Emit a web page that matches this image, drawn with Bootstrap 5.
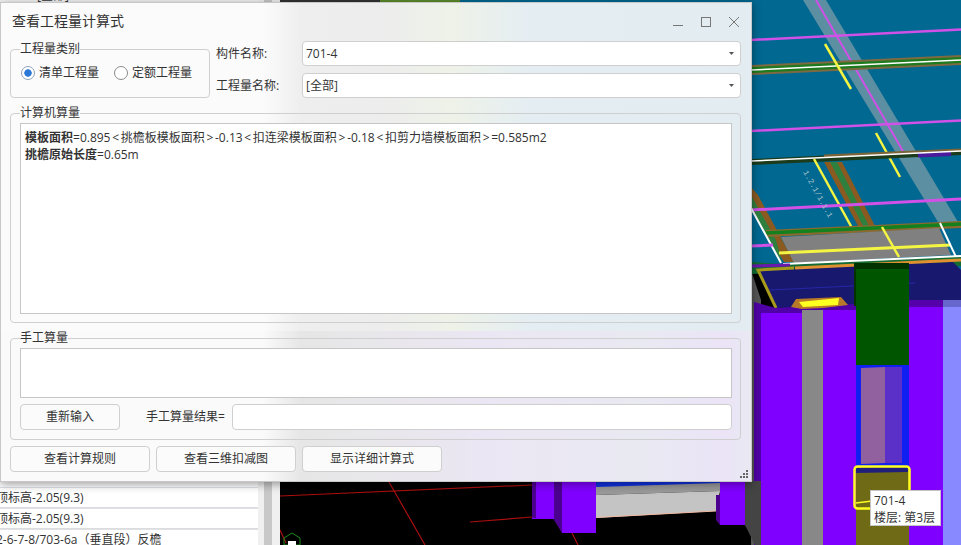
<!DOCTYPE html>
<html lang="zh-CN">
<head>
  <meta charset="UTF-8">
  <meta name="viewport" content="width=device-width, initial-scale=1.0">
  <title>查看工程量计算式</title>
  <link href="https://cdn.jsdelivr.net/npm/bootstrap@5.3.3/dist/css/bootstrap.min.css" rel="stylesheet">
  <style>
    html, body { height: 545px; overflow: hidden; }
    body {
      position: relative;
      font-family: "Open Sans", "Noto Sans CJK SC", sans-serif;
      font-size: 12px;
      color: #333;
      background: #f0f0f0;
    }

    /* app behind the dialog */
    .app-left { width: 280px; height: 545px; flex: none; }
    .tree-col { width: 258px; background: #fff; overflow: hidden; }
    .clip-top { margin-top: -12px; height: 15px; line-height: 15px; padding-left: 37px; background: #f4f4f4; }
    .tree-list { border-radius: 0; }
    .tree-row {
      height: 21px;
      line-height: 20px;
      padding: 0;
      margin: 0;
      font-size: 12px;
      color: #333;
      white-space: nowrap;
      overflow: hidden;
      text-indent: -4px;
      border-color: #dcdcdc;
    }
    .tree-row:last-child { height: 16px; }
    .track { width: 8px; margin: 0 8px 0 6px; background: #c8c8c8; }
    .scene { width: 681px; height: 545px; flex: none; display: block; }

    /* tooltip over the model */
    .tip3d {
      position: absolute;
      left: 870px;
      top: 490px;
      width: 71px;
      height: 36px;
      padding: 1px 0 0 3px;
      background: #fff;
      border: 1px solid #c4c4c4;
      line-height: 17px;
      color: #333;
    }

    /* dialog */
    .dlg {
      position: absolute;
      left: 0;
      top: 2px;
      width: 752px;
      height: 480px;
      padding: 0 10px 0 9px;
      border: 1px solid #c8c8c8;
      box-shadow: 0 2px 9px rgba(0, 0, 0, .4);
      background-color: #eee;
      background-image:
        linear-gradient(90deg, #fafafa 0, #fafafa 262px, #e6e6e6 300px, #e8e7ea 370px, #ebe6f3 480px, #e9e9f2 640px, #ebe4f7 725px, #e9e9f2 100%),
        linear-gradient(90deg, #fbfbfb 0, #fbfbfb 262px, #eeeeee 300px, #ededed 380px, #eef2e8 450px, #e4edf2 530px, #e2ecf1 100%);
      background-size: 100% 150px, 100% 100%;
      background-position: 0 100%, 0 0;
      background-repeat: no-repeat;
    }
    .dlg-head { height: 38px; }
    .dlg-title { font-size: 14px; line-height: 20px; padding: 0 0 3px 2px; color: #333; }
    .win-btns { margin-right: 2px; gap: 18px; }

    .grp {
      border: 1px solid #cfcfcf;
      border-radius: 4px;
      padding: 0 8px 9px 9px;
    }
    .grp legend {
      float: none;
      width: auto;
      margin: 0;
      padding: 0;
      font-size: 12px;
      line-height: 16px;
      color: #333;
    }
    .grp-kind { width: 200px; height: 57px; flex: none; }
    .grp-pc { height: 218px; margin-top: 7px; }
    .grp-hand { height: 110px; margin-top: 7px; }

    .opts { gap: 15px; padding: 8px 0 0 1px; }
    .opt { display: flex; align-items: center; gap: 4px; margin: 0; padding: 0; min-height: 0; }
    .opt .form-check-input {
      float: none;
      margin: 0;
      width: 14px;
      height: 14px;
      border-color: #8b8b8b;
      background-color: #fff;
    }
    .opt .form-check-input:checked {
      border-color: #8da3bb;
      background-image: none;
      background: radial-gradient(circle, #2b78d6 0, #2b78d6 3.4px, #fff 4px);
    }
    .opt label { line-height: 16px; }

    .sel-col { margin-left: 6px; gap: 7px; }
    .field-lbl { width: 86px; flex: none; padding-top: 1px; white-space: nowrap; }
    .combo {
      height: 25px;
      padding: 0 20px 0 3px;
      font-size: 12px;
      color: #333;
      border: 1px solid #cfcfcf;
      border-radius: 4px;
      background-color: #fff;
      background-image: url("data:image/svg+xml,%3csvg xmlns='http://www.w3.org/2000/svg' width='5' height='3'%3e%3cpath fill='%23555' d='M0 0h5L2.5 3z'/%3e%3c/svg%3e");
      background-size: 5px 3px;
      background-position: right 6px center;
    }

    .memo {
      height: 191px;
      padding: 5px 4px;
      margin-top: 2px;
      border: 1px solid #c6c6c6;
      border-radius: 0;
      font-size: 12px;
      line-height: 17px;
      color: #333;
      background: #fff;
    }
    .ang { padding: 0 1.7px; }
    .memo-hand { height: 50px; margin-top: 2px; resize: none; }
    .hand-row { margin-top: 6px; }
    .res-lbl { margin: 0 7px 0 26px; white-space: nowrap; }
    .res-input {
      height: 26px;
      padding: 0 4px;
      border: 1px solid #cfcfcf;
      border-radius: 4px;
      font-size: 12px;
      background: #fff;
    }

    .btn-flat {
      height: 26px;
      padding: 0;
      font-size: 12px;
      color: #333;
      background: #fbfbfb;
      border: 1px solid #cfcfcf;
      border-radius: 4px;
    }
    .btn-redo { width: 100px; flex: none; }
    .btn-foot { width: 140px; }
    .foot-row { margin-top: 6px; gap: 6px; }

    .grip { position: absolute; right: 2px; bottom: 2px; display: block; }
  </style>
</head>
<body>

  <div class="d-flex">
    <!-- left tree, mostly behind the dialog -->
    <div class="app-left d-flex">
      <div class="tree-col d-flex flex-column justify-content-between">
        <div class="clip-top">[全部]</div>
        <ul class="list-group list-group-flush tree-list">
          <li class="list-group-item tree-row border-top">顶标高-2.05(9.3)</li>
          <li class="list-group-item tree-row border-top">顶标高-2.05(9.3)</li>
          <li class="list-group-item tree-row border-top">2-6-7-8/703-6a（垂直段）反檐</li>
        </ul>
      </div>
      <div class="track"></div>
    </div>

    <!-- 3D model view -->
    <svg class="scene" viewBox="280 0 681 545" xmlns="http://www.w3.org/2000/svg">
      <rect x="280" y="0" width="681" height="545" fill="#000"/>
      <rect x="280" y="0" width="100" height="4" fill="#333"/>
      <rect x="380" y="0" width="80" height="4" fill="#5c8a2a"/>
      <rect x="460" y="0" width="501" height="270" fill="#006891"/>

      <!-- slab lines, upper right -->
      <polygon points="803,0 826,0 958,222 938,222" fill="#5c8fa2"/>
      <path d="M816 0 904 153" stroke="#d050e8" stroke-width="2" fill="none"/>
      <path d="M751 40 961 29.5M751 131 961 120.5" stroke="#d050e8" stroke-width="2.5" fill="none"/>
      <path d="M751 70 961 60" stroke="#7d6a42" stroke-width="10" fill="none"/>
      <path d="M751 70 961 60" stroke="#1d7a1d" stroke-width="6" fill="none"/>
      <path d="M751 70 961 60" stroke="#fff" stroke-width="1.5" fill="none"/>
      <path d="M825 44 851 89M876 133 900 177" stroke="#f4f442" stroke-width="2.5" fill="none"/>

      <path d="M751 162 961 152" stroke="#1b3b1b" stroke-width="6" fill="none"/>
      <path d="M824 156 961 150" stroke="#7a6438" stroke-width="3" fill="none"/>
      <path d="M918 155 951 153.5" stroke="#4c1a9c" stroke-width="5" fill="none"/>
      <path d="M751 161 961 151" stroke="#fff" stroke-width="1.5" fill="none"/>

      <polygon points="824,162 842,162 875,226 858,226" fill="#8a5a20"/>
      <polygon points="830,162 837,162 869,226 863,226" fill="#2f7f3f"/>
      <polygon points="751,187 758,195 794,262 784,262 751,207" fill="#8a5a20"/>
      <polygon points="751,195 776,240 782,262 751,209" fill="#2f7f3f"/>
      <path d="M814 159 852 228" stroke="#f4f442" stroke-width="2.5" fill="none"/>
      <path d="M751 210 961 199" stroke="#d050e8" stroke-width="3" fill="none"/>
      <text x="803" y="172" transform="rotate(61 803 172)" font-size="8" fill="#a9c0ca" font-family="Liberation Mono, monospace">1.2.1/1.1.1</text>

      <polygon points="766,230 961,221 961,228 766,237" fill="#8a6a30"/>
      <path d="M766 233 961 224" stroke="#14801e" stroke-width="3.5" fill="none"/>
      <polygon points="781,237 939,228 951,255 794,263" fill="#808080"/>
      <path d="M779 253 951 245" stroke="#f4f442" stroke-width="3" fill="none"/>
      <path d="M882 227 899 257" stroke="#f4f442" stroke-width="2.5" fill="none"/>
      <path d="M751 208 781 263M940 223 956 257" stroke="#fff" stroke-width="2" fill="none"/>
      <path d="M751 246 773 245" stroke="#d050e8" stroke-width="3" fill="none"/>

      <!-- band over the columns -->
      <polygon points="751,262 781,264 961,256 961,266 751,274" fill="#146c33"/>
      <path d="M783 264 961 256" stroke="#fff" stroke-width="2" fill="none"/>
      <polygon points="751,270 751,545 761,545 761,300" fill="#555"/>
      <path d="M751 266 790 265" stroke="#6a18b0" stroke-width="3" fill="none"/>
      <polygon points="758,270 953,262 961,270 961,302 776,310" fill="#18186e"/>
      <path d="M795 268 961 260" stroke="#e09030" stroke-width="3" fill="none"/>
      <path d="M794 268 758 270 776 308" stroke="#a89a1a" stroke-width="3" fill="none"/>
      <path d="M770 290 915 283" stroke="#2626a8" stroke-width="1" fill="none"/>

      <!-- columns -->
      <polygon points="754,302 776,308 856,304 856,313 761,313 761,545 754,545" fill="#4f00a6"/>
      <rect x="761" y="313" width="41" height="232" fill="#8000ff"/>
      <rect x="802" y="310" width="21" height="235" fill="#888"/>
      <rect x="823" y="310" width="33" height="235" fill="#8000ff"/>
      <polygon points="791,307 796,299 841,297 848,305 823,308 802,309" fill="#b87a28"/>
      <polygon points="799,302 839,298 838,305 803,307" fill="#ffff20"/>
      <rect x="909" y="300" width="34" height="8" fill="#5500aa"/>
      <rect x="909" y="307" width="34" height="238" fill="#8000ff"/>
      <rect x="943" y="300" width="18" height="8" fill="#6666cc"/>
      <rect x="943" y="307" width="18" height="238" fill="#8888ff"/>
      <rect x="854" y="263" width="55" height="7" fill="#003300"/>
      <rect x="854" y="268" width="3" height="38" fill="#003300"/>
      <rect x="856" y="269" width="53" height="96" fill="#005500"/>

      <!-- blue opening and selected column -->
      <rect x="856" y="365" width="53" height="102" fill="#1020f0"/>
      <polygon points="861,368 885,367 885,463 861,464" fill="#90609f"/>
      <rect x="885" y="367" width="17" height="96" fill="#5a30c8"/>
      <rect x="856" y="467" width="53" height="78" fill="#6f6a15"/>
      <polygon points="856,468 908,466 908,472 856,473" fill="#20207a"/>
      <rect x="854.5" y="466.5" width="55" height="42" rx="3" fill="none" stroke="#ffff20" stroke-width="2.5"/>
      <path d="M856 503 880 500" stroke="#ffff20" stroke-width="1.5" fill="none"/>

      <!-- bottom strip -->
      <polygon points="745,481 761,481 761,545 755,545 745,525" fill="#444"/>
      <path d="M280 496 532 485M389 482 425 545M572 533 578 545M280 530 286 543M470 522 532 517" stroke="#a80f0f" stroke-width="1.2" fill="none"/>
      <polygon points="284,545 284,538 292,533 300,538 300,545" fill="none" stroke="#1c8a1c" stroke-width="1"/>
      <rect x="288" y="541" width="8" height="4" fill="#fff"/>
      <rect x="532" y="478" width="22" height="41" fill="#8000ff"/>
      <rect x="532" y="478" width="4" height="40" fill="#4c0090"/>
      <polygon points="554,478 562,478 562,533 554,520" fill="#4c0090"/>
      <rect x="562" y="478" width="34" height="55" fill="#8000ff"/>
      <rect x="596" y="478" width="124" height="9" fill="#1030e0"/>
      <polygon points="596,487 720,483 720,491 596,495" fill="#999"/>
      <polygon points="596,495 720,491 716,511 596,518" fill="#c4c4c4"/>
      <path d="M596 517.5 716 511" stroke="#f0b8a0" stroke-width="1" fill="none"/>
      <polygon points="716,495 720,495 720,525 716,520" fill="#4c0090"/>
      <rect x="720" y="478" width="25" height="47" fill="#8000ff"/>
    </svg>
  </div>

  <div class="tip3d">701-4<br>楼层: 第3层</div>

  <!-- 查看工程量计算式 dialog -->
  <div class="dlg">
    <div class="dlg-head d-flex justify-content-between align-items-center">
      <div class="dlg-title">查看工程量计算式</div>
      <div class="win-btns d-flex align-items-center">
        <svg width="10" height="10" viewBox="0 0 10 10"><path d="M0 8.5h10" stroke="#777" stroke-width="1"/></svg>
        <svg width="10" height="10" viewBox="0 0 10 10"><rect x=".5" y=".5" width="9" height="9" fill="none" stroke="#777"/></svg>
        <svg width="10" height="10" viewBox="0 0 10 10"><path d="M0 0 10 10M10 0 0 10" stroke="#777" stroke-width="1"/></svg>
      </div>
    </div>

    <div class="d-flex">
      <fieldset class="grp grp-kind">
        <legend>工程量类别</legend>
        <div class="d-flex opts">
          <div class="form-check opt">
            <input class="form-check-input" type="radio" name="kind" id="kindQd" checked>
            <label for="kindQd">清单工程量</label>
          </div>
          <div class="form-check opt">
            <input class="form-check-input" type="radio" name="kind" id="kindDe">
            <label for="kindDe">定额工程量</label>
          </div>
        </div>
      </fieldset>

      <div class="flex-grow-1 d-flex flex-column sel-col">
        <div class="d-flex align-items-center">
          <div class="field-lbl">构件名称:</div>
          <select class="form-select combo"><option>701-4</option></select>
        </div>
        <div class="d-flex align-items-center">
          <div class="field-lbl">工程量名称:</div>
          <select class="form-select combo"><option>[全部]</option></select>
        </div>
      </div>
    </div>

    <fieldset class="grp grp-pc">
      <legend>计算机算量</legend>
      <div class="form-control memo"><strong>模板面积</strong>=0.895<span class="ang">&lt;</span>挑檐板模板面积<span class="ang">&gt;</span>-0.13<span class="ang">&lt;</span>扣连梁模板面积<span class="ang">&gt;</span>-0.18<span class="ang">&lt;</span>扣剪力墙模板面积<span class="ang">&gt;</span>=0.585m2<br><strong>挑檐原始长度</strong>=0.65m</div>
    </fieldset>

    <fieldset class="grp grp-hand">
      <legend>手工算量</legend>
      <textarea class="form-control memo memo-hand"></textarea>
      <div class="d-flex align-items-center hand-row">
        <button type="button" class="btn btn-flat btn-redo">重新输入</button>
        <span class="res-lbl">手工算量结果=</span>
        <input type="text" class="form-control res-input">
      </div>
    </fieldset>

    <div class="d-flex foot-row">
      <button type="button" class="btn btn-flat btn-foot">查看计算规则</button>
      <button type="button" class="btn btn-flat btn-foot">查看三维扣减图</button>
      <button type="button" class="btn btn-flat btn-foot">显示详细计算式</button>
    </div>

    <svg class="grip" width="9" height="9" viewBox="0 0 9 9"><path d="M6 0h2v2H6zM3 3h2v2H3zM6 3h2v2H6zM0 6h2v2H0zM3 6h2v2H3zM6 6h2v2H6z" fill="#666"/></svg>
  </div>

</body>
</html>
